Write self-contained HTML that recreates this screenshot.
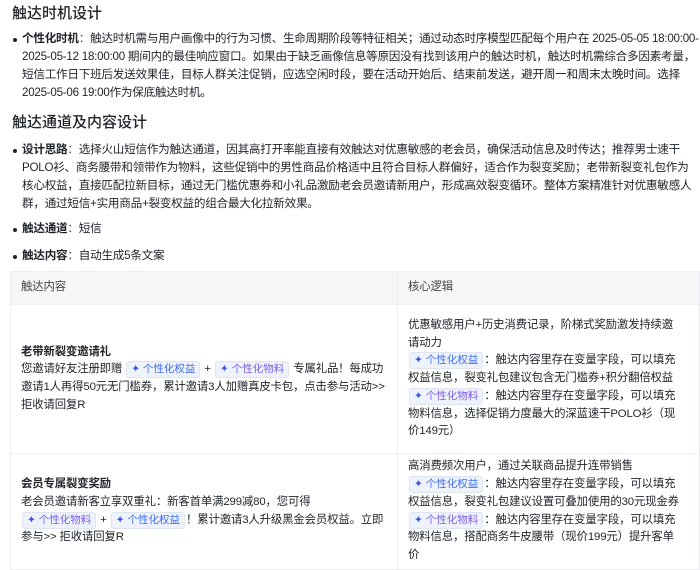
<!DOCTYPE html>
<html><head><meta charset="utf-8"><style>
body{margin:0;width:700px;height:569px;overflow:hidden;background:#fff;font-family:"Liberation Sans","Noto Sans CJK SC",sans-serif;color:#1f2329;}
h2{font-size:15px;font-weight:500;margin:0;position:absolute;left:12px;line-height:20px;}
.ul{position:absolute;left:0;width:699px;font-size:11.6px;line-height:18px;letter-spacing:-0.25px;}
.li{position:relative;padding-left:22px;}
.li:before{content:"";position:absolute;left:13px;top:8px;width:4px;height:4px;border-radius:50%;background:#1f2329;}
b{font-weight:700;}
.lbl{color:#555;}
table{position:absolute;left:10px;top:271px;width:690px;border-collapse:collapse;font-size:11.4px;line-height:17.7px;letter-spacing:-0.15px;}
td,th{border:1px solid #eceef1;vertical-align:middle;text-align:left;padding:0 10px;}
td.r{padding-right:15px;}
th{background:#f5f6f7;font-weight:400;color:#444;height:32px;}
.tag{display:inline-block;background:#eef3fb;border:1px solid #dfe5ef;border-radius:3px;padding:0 4px;font-size:10.5px;line-height:15px;color:#3d6cf0;margin:0 1px;letter-spacing:0;}
.tag i{font-style:normal;color:#3d57e0;}
.t2{color:#7b5ce8}
</style></head><body>
<h2 style="top:4px">触达时机设计</h2>
<div class="ul" style="top:30px"><div class="li"><b>个性化时机</b><span class="lbl">：</span>触达时机需与用户画像中的行为习惯、生命周期阶段等特征相关；通过动态时序模型匹配每个用户在 2025-05-05 18:00:00-2025-05-12 18:00:00 期间内的最佳响应窗口。如果由于缺乏画像信息等原因没有找到该用户的触达时机，触达时机需综合多因素考量，短信工作日下班后发送效果佳，目标人群关注促销，应选空闲时段，要在活动开始后、结束前发送，避开周一和周末太晚时间。选择 2025-05-06 19:00作为保底触达时机。</div></div>
<h2 style="top:113px">触达通道及内容设计</h2>
<div class="ul" style="top:141px"><div class="li"><b>设计思路</b><span class="lbl">：</span>选择火山短信作为触达通道，因其高打开率能直接有效触达对优惠敏感的老会员，确保活动信息及时传达；推荐男士速干POLO衫、商务腰带和领带作为物料，这些促销中的男性商品价格适中且符合目标人群偏好，适合作为裂变奖励；老带新裂变礼包作为核心权益，直接匹配拉新目标，通过无门槛优惠券和小礼品激励老会员邀请新用户，形成高效裂变循环。整体方案精准针对优惠敏感人群，通过短信+实用商品+裂变权益的组合最大化拉新效果。</div></div>
<div class="ul" style="top:220px"><div class="li"><b>触达通道</b><span class="lbl">：</span>短信</div></div>
<div class="ul" style="top:247px"><div class="li"><b>触达内容</b><span class="lbl">：</span>自动生成5条文案</div></div>
<table>
<tr><th style="width:366px">触达内容</th><th>核心逻辑</th></tr>
<tr style="height:149px"><td><b>老带新裂变邀请礼</b><br>您邀请好友注册即赠 <span class="tag"><i>✦</i> 个性化权益</span> + <span class="tag t2"><i>✦</i> 个性化物料</span> 专属礼品！每成功邀请1人再得50元无门槛券，累计邀请3人加赠真皮卡包，点击参与活动&gt;&gt; 拒收请回复R</td>
<td class="r">优惠敏感用户+历史消费记录，阶梯式奖励激发持续邀请动力<br><span class="tag"><i>✦</i> 个性化权益</span>：触达内容里存在变量字段，可以填充权益信息，裂变礼包建议包含无门槛券+积分翻倍权益<br><span class="tag t2"><i>✦</i> 个性化物料</span>：触达内容里存在变量字段，可以填充物料信息，选择促销力度最大的深蓝速干POLO衫（现价149元）</td></tr>
<tr style="height:116px"><td><b>会员专属裂变奖励</b><br>老会员邀请新客立享双重礼：新客首单满299减80，您可得 <span class="tag t2"><i>✦</i> 个性化物料</span> + <span class="tag"><i>✦</i> 个性化权益</span>！累计邀请3人升级黑金会员权益。立即参与&gt;&gt; 拒收请回复R</td>
<td class="r">高消费频次用户，通过关联商品提升连带销售<br><span class="tag"><i>✦</i> 个性化权益</span>：触达内容里存在变量字段，可以填充权益信息，裂变礼包建议设置可叠加使用的30元现金券<br><span class="tag t2"><i>✦</i> 个性化物料</span>：触达内容里存在变量字段，可以填充物料信息，搭配商务牛皮腰带（现价199元）提升客单价</td></tr>
</table>
</body></html>
